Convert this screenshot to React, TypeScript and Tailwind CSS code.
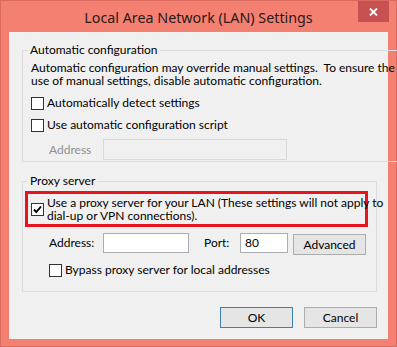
import React from "react";

const font = { fontFamily: 'Lato, "Noto Sans", sans-serif' };

function Check({ checked }: { checked?: boolean }) {
  return (
    <div className="w-[13px] h-[13px] shrink-0 border border-[#333333] bg-white flex items-center justify-center">
      {checked && (
        <svg width="11" height="11" viewBox="0 0 11 11">
          <path d="M2 5.5 L4.3 8 L9 2.5" fill="none" stroke="#000" strokeWidth="1.9" />
        </svg>
      )}
    </div>
  );
}

export default function App() {
  return (
    <div
      className="w-[397px] h-[347px] bg-[#f48072] border border-[#d96b5e] flex flex-col text-[12px] text-black"
      style={font}
    >
      <div className="relative h-[31px] shrink-0 flex items-center justify-center">
        <span className="text-[14.3px] text-[#2b1a18] font-['Noto_Sans'] pt-[2px]">Local Area Network (LAN) Settings</span>
        <div className="absolute top-0 right-[7px] w-[31px] h-[21px] bg-[#c75050] flex items-center justify-center">
          <svg width="9" height="8" viewBox="0 0 9 8">
            <path d="M1 0.5 L8 7.5 M8 0.5 L1 7.5" stroke="#fff" strokeWidth="1.8" />
          </svg>
        </div>
      </div>
      <div className="mx-[8px] h-[307px] bg-[#f0f0f0] flex flex-col">
        <fieldset className="mx-[13px] mt-[10px] border border-[#dcdcdc] px-[8px] pb-[1px]">
          <legend className="ml-[-3px] px-[2px] leading-[16px]">Automatic configuration</legend>
          <p className="mt-[3px] leading-[13px] whitespace-pre">
            {"Automatic configuration may override manual settings.  To ensure the\nuse of manual settings, disable automatic configuration."}
          </p>
          <div className="mt-[8px] h-[16px] flex items-center gap-[3px]">
            <Check />
            <span>Automatically detect settings</span>
          </div>
          <div className="mt-[6px] h-[16px] flex items-center gap-[3px]">
            <Check />
            <span>Use automatic configuration script</span>
          </div>
          <div className="mt-[6px] h-[21px] flex items-center">
            <span className="ml-[18px] w-[54px] text-[#8f8f8f]">Address</span>
            <div className="w-[184px] h-[21px] border border-[#d9d9d9] bg-[#f0f0f0]" />
          </div>
        </fieldset>
        <fieldset className="mx-[13px] mt-[11px] border border-[#dcdcdc] px-[8px] pb-[13px]">
          <legend className="ml-[-3px] px-[2px] leading-[16px]">Proxy server</legend>
          <div className="mt-[2px] ml-[-6px] w-[343px] border-[3px] border-[#e8141c] py-[2px] pl-[3px] flex items-center gap-[3px]">
            <Check checked />
            <span className="leading-[13px] whitespace-pre">
              {"Use a proxy server for your LAN (These settings will not apply to\ndial-up or VPN connections)."}
            </span>
          </div>
          <div className="mt-[6px] flex items-start">
            <span className="ml-[18px] w-[54px] h-[20px] flex items-center">Address:</span>
            <div className="w-[86px] h-[20px] border border-[#abadb3] bg-white" />
            <span className="ml-[15px] w-[36px] h-[20px] flex items-center">Port:</span>
            <div className="w-[48px] h-[20px] border border-[#abadb3] bg-white flex items-center pl-[4px]">80</div>
            <div className="ml-[5px] mt-[1px] w-[73px] h-[21px] border border-[#acacac] bg-[#e5e5e5] flex items-center justify-center">
              Advanced
            </div>
          </div>
          <div className="mt-[7px] h-[16px] flex items-center gap-[3px] ml-[18px]">
            <Check />
            <span>Bypass proxy server for local addresses</span>
          </div>
        </fieldset>
        <div className="mt-[15px] mr-[11px] flex justify-end gap-[11px]">
          <div className="w-[73px] h-[21px] border border-[#3c7fb1] bg-[#e5e5e5] flex items-center justify-center">OK</div>
          <div className="w-[73px] h-[21px] border border-[#acacac] bg-[#e5e5e5] flex items-center justify-center">Cancel</div>
        </div>
      </div>
    </div>
  );
}
